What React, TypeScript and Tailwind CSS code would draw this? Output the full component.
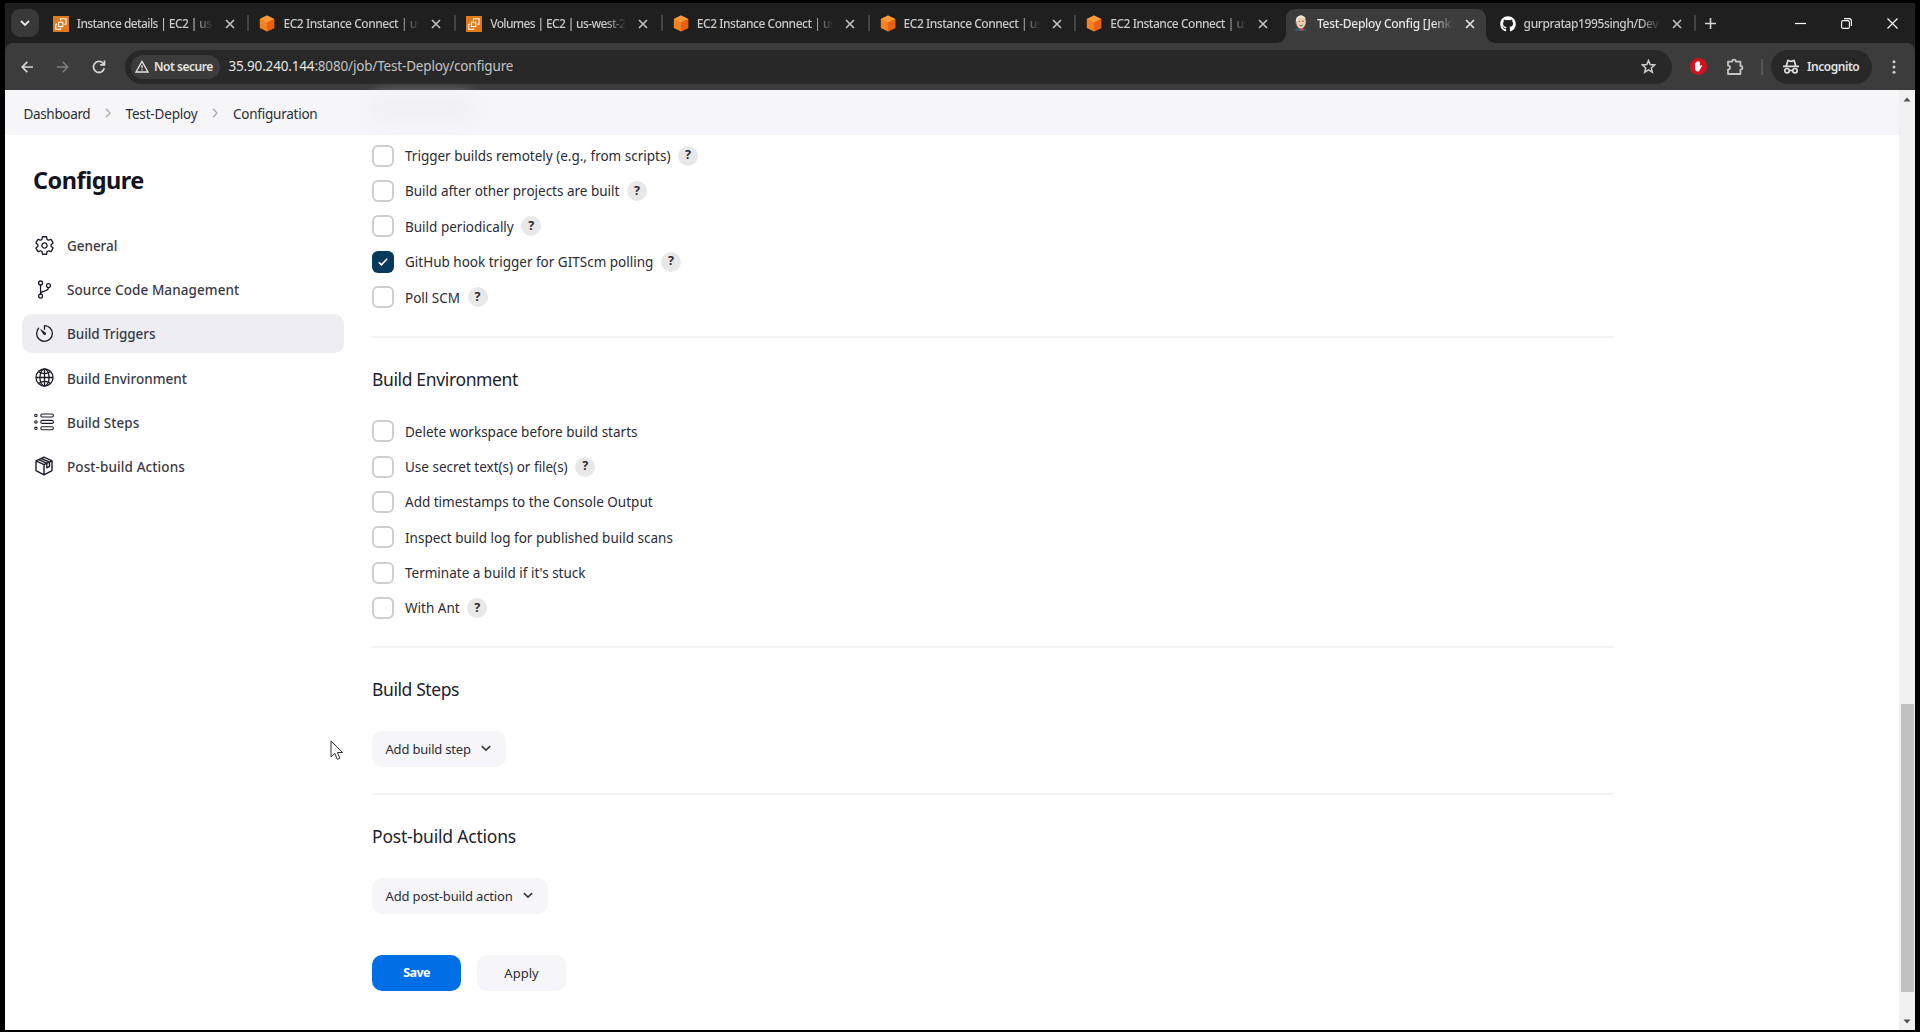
import type { ReactNode } from "react";
import { IoSettingsOutline, IoGlobeOutline, IoTimerOutline, IoGitBranchOutline } from "react-icons/io5";
import { FaGithub } from "react-icons/fa";

const Ec2Icon = () => (
  <svg width="16" height="16" viewBox="0 0 16 16" fill="none">
    <rect width="16" height="16" fill="#e07a1a" />
    <path d="M5.5 6.2h4.3v4.3H5.500zM4 8.300H2.800v5H7.600v-1.500M7.500 4.500V2.700h5.600v5.500h-1.700" stroke="#fff" strokeWidth="1.100" />
  </svg>
);

const CubeIcon = () => (
  <svg width="16" height="17" viewBox="0 0 16 17">
    <path d="M8 .5 15.200 4v9L8 16.500.8 13V4z" fill="#f58220" />
    <path d="M8 .5 15.200 4 8 7.400.8 4z" fill="#fb9a34" />
    <path d="M8 7.400 15.200 4v9L8 16.500z" fill="#e9600f" />
  </svg>
);

const JenkinsIcon = () => (
  <svg width="16" height="17" viewBox="0 0 16 17">
    <path d="M1.500 16c.3-1.800 2-2.700 4-2.800l5 .2c1.600.2 2.300 1.200 2.500 2.600z" fill="#2f5f86" />
    <path d="M6 12.500h4.500l-.6 3.500H8z" fill="#c9453a" />
    <ellipse cx="7.800" cy="7" rx="5" ry="6.400" fill="#ecd0b0" />
    <path d="M3 6C2.600 2.800 5 .6 8 .6c2.500 0 4.200 1.300 4.700 3.200C10.500 2.500 7.500 2.300 5.600 3.200 4.700 4.500 4.700 6 4.300 7.500z" fill="#f6e7d2" />
    <path d="M5.800 6.300h1.400M9.200 6.300h1.400M6.500 10.200c1 .6 2.200.6 3.200 0" stroke="#5d4030" strokeWidth=".9" fill="none" />
    <path d="M2.900 6.500c0 2 .6 4 1.800 5.600" stroke="#7a6353" strokeWidth=".8" fill="none" />
  </svg>
);

const CloseIcon = () => (
  <svg width="10" height="10" viewBox="0 0 10 10" stroke="currentColor" strokeWidth="1.600">
    <path d="m1 1 8 8M9 1 1 9" />
  </svg>
);

type Tab = { icon: ReactNode; title: string; tracking: string; active?: boolean };

const tabs: Tab[] = [
  { icon: <Ec2Icon />, title: "Instance details | EC2 | us-west-2", tracking: "tracking-[-0.6px]" },
  { icon: <CubeIcon />, title: "EC2 Instance Connect | us-west-2", tracking: "tracking-[-0.47px]" },
  { icon: <Ec2Icon />, title: "Volumes | EC2 | us-west-2", tracking: "tracking-[-0.64px]" },
  { icon: <CubeIcon />, title: "EC2 Instance Connect | us-west-2", tracking: "tracking-[-0.47px]" },
  { icon: <CubeIcon />, title: "EC2 Instance Connect | us-west-2", tracking: "tracking-[-0.47px]" },
  { icon: <CubeIcon />, title: "EC2 Instance Connect | us-west-2", tracking: "tracking-[-0.47px]" },
  { icon: <JenkinsIcon />, title: "Test-Deploy Config [Jenkins]", tracking: "tracking-[-0.25px]", active: true },
  { icon: <FaGithub size={16} color="#fff" />, title: "gurpratap1995singh/DevOps", tracking: "tracking-[-0.4px]" },
];

function TabItem({ tab, separator }: { tab: Tab; separator: boolean }) {
  return (
    <div className="relative flex h-[40px] w-[206.700px] shrink-0 items-center pt-[1px] pl-[11px]">
      {tab.active && (
        <svg className="absolute bottom-0 left-[-6px]" width="222" height="34" viewBox="0 0 222 34">
          <path d="M0 34c6 0 10-4 10-10V9c0-5 4-9 9-9h182c5 0 9 4 9 9v15c0 6 4 10 10 10z" fill="#3c3c3c" />
        </svg>
      )}
      <div className="relative flex w-[17px] shrink-0">{tab.icon}</div>
      <div
        className={`relative ml-[7px] w-[138px] overflow-hidden whitespace-nowrap text-[12px] font-medium [mask-image:linear-gradient(to_right,#000_84%,transparent_99%)] ${tab.active ? "text-[#e6e6e6]" : "text-[#c9c9c9]"} ${tab.tracking}`}
      >
        {tab.title}
      </div>
      <div className={`relative ml-[10px] ${tab.active ? "text-[#e6e6e6]" : "text-[#c4c4c4]"}`}>
        <CloseIcon />
      </div>
      {separator && <div className="absolute top-[12px] right-[-1px] h-[16px] w-[2px] bg-[#434343]" />}
    </div>
  );
}

function TabStrip() {
  return (
    <div className="flex h-[40px] items-center bg-[#1f1f1f]">
      <div className="ml-[6px] flex h-[28px] w-[28px] shrink-0 items-center justify-center rounded-[9px] bg-[#393939]">
        <svg width="10" height="7" viewBox="0 0 10 7" fill="none" stroke="#e8e8e8" strokeWidth="1.800">
          <path d="m1 1 4 4 4-4" />
        </svg>
      </div>
      <div className="ml-[2.800px] flex">
        {tabs.map((t, i) => (
          <TabItem key={i} tab={t} separator={i !== 5 && i !== 6} />
        ))}
      </div>
      <svg className="ml-[10px]" width="11" height="11" viewBox="0 0 11 11" stroke="#d5d5d5" strokeWidth="1.600">
        <path d="M5.500 0v11M0 5.500h11" />
      </svg>
      <div className="mr-[17px] ml-auto flex items-center gap-[35px]">
        <svg width="11" height="11" viewBox="0 0 11 11" stroke="#fff" strokeWidth="1.200">
          <path d="M0 5.500h11" />
        </svg>
        <svg width="11" height="11" viewBox="0 0 11 11" fill="none" stroke="#fff" strokeWidth="1.100">
          <rect x=".6" y="2.600" width="7.800" height="7.800" rx="1.500" />
          <path d="M3 .6h5.200a2.200 2.200 0 0 1 2.200 2.200V8" />
        </svg>
        <svg width="11" height="11" viewBox="0 0 11 11" stroke="#fff" strokeWidth="1.200">
          <path d="m.5.5 10 10M10.500.5l-10 10" />
        </svg>
      </div>
    </div>
  );
}

function Toolbar() {
  return (
    <div className="bg-[#1f1f1f]">
      <div className="flex h-[47px] items-center rounded-t-[8px] bg-[#3c3c3c]">
        <svg className="ml-[16px]" width="12" height="12" viewBox="0 0 12 12" fill="none" stroke="#d6d6d6" strokeWidth="1.700">
          <path d="M12 6H1.300M6.300.8 1.200 6l5.100 5.200" />
        </svg>
        <svg className="ml-[24px]" width="12" height="12" viewBox="0 0 12 12" fill="none" stroke="#808080" strokeWidth="1.500">
          <path d="M0 6h10.700M5.700.8 10.800 6l-5.100 5.200" />
        </svg>
        <svg className="ml-[23px]" width="14" height="14" viewBox="0 0 14 14" fill="none" stroke="#d6d6d6" strokeWidth="1.700">
          <path d="M12.300 8.300A5.500 5.500 0 1 1 11 3.200l1.300 1.300" />
          <path d="M12.500.6v4.300H8.200" />
        </svg>
        <div className="ml-[19px] flex h-[34px] w-[1547px] items-center rounded-full bg-[#282828] pl-[6px]">
          <div className="flex h-[24px] w-[89px] items-center rounded-full bg-[#3c3c3c] pl-[4px]">
            <svg width="14" height="13" viewBox="0 0 14 13" fill="none" stroke="#e3e3e3" strokeWidth="1.300">
              <path d="M7 1.400 13 12H1zM7 5v3.300M7 9.300v1.300" />
            </svg>
            <span className="ml-[5px] text-[12px] font-semibold tracking-[-0.48px] whitespace-nowrap text-[#e3e3e3]">Not secure</span>
          </div>
          <span className="ml-[8.500px] text-[13.500px] tracking-[-0.17px] whitespace-nowrap">
            <span className="text-[#e6e6e6]">35.90.240.144</span>
            <span className="text-[#c4c4c4]">:8080/job/Test-Deploy/configure</span>
          </span>
          <svg className="mr-[16px] ml-auto" width="15" height="15" viewBox="0 0 15 15" fill="none" stroke="#cfcfcf" strokeWidth="1.500">
            <path d="m7.500 1.600 1.700 4 4.400.4-3.300 2.900 1 4.300-3.800-2.300-3.800 2.300 1-4.300L1.400 6l4.400-.4z" />
          </svg>
        </div>
        <svg className="ml-[18px]" width="17" height="17" viewBox="0 0 17 17">
          <circle cx="8.500" cy="8.500" r="8.500" fill="#d5121c" />
          <path d="M5 8.600V5.300a.6.6 0 0 1 1.200 0V4.200a.6.6 0 0 1 1.200 0v-.6a.6.6 0 0 1 1.300 0v.6a.6.600 0 0 1 1.200 0v4l1-1c.7-.5 1.500.1 1.100.8l-2.300 4.300c-.4.800-1 1.200-1.900 1.200-1.800 0-2.800-1.200-2.800-2.900z" fill="#fff" />
        </svg>
        <svg className="ml-[19px]" width="18" height="18" viewBox="0 0 18 18" fill="none" stroke="#c4c4c4" strokeWidth="1.800">
          <path d="M2 3.600h4.200c0-2.600 3.600-2.600 3.600 0h4.600V8c2.600 0 2.600 3.600 0 3.600V16H2v-4.300c2.700-.4 2.700-3.600 0-4z" strokeLinejoin="round" />
        </svg>
        <div className="ml-[17px] h-[16px] w-[2px] bg-[#555]" />
        <div className="ml-[8px] flex h-[34px] w-[101px] items-center rounded-full bg-[#282828] pl-[12px]">
          <svg width="16" height="15" viewBox="0 0 16 15" fill="none" stroke="#e0e0e0" strokeWidth="1.700">
            <path d="M0 7.300h16M3.300 7 4.900 1.500l3.100.8 3.100-.8L12.700 7M6.600 11.700q1.400-.9 2.800 0" />
            <circle cx="4" cy="11.700" r="2.200" />
            <circle cx="12" cy="11.700" r="2.200" />
          </svg>
          <span className="ml-[8px] text-[12px] font-semibold tracking-[-0.45px] text-[#e3e3e3]">Incognito</span>
        </div>
        <svg className="ml-[20px]" width="4" height="14" viewBox="0 0 4 14" fill="#d0d0d0">
          <circle cx="2" cy="1.700" r="1.500" />
          <circle cx="2" cy="7" r="1.500" />
          <circle cx="2" cy="12.300" r="1.500" />
        </svg>
      </div>
    </div>
  );
}

const CrumbArrow = () => (
  <svg className="mb-[2px]" width="6" height="10" viewBox="0 0 6 10" fill="none" stroke="#a9a9b2" strokeWidth="1.300">
    <path d="m1 .8 4 4.200-4 4.200" />
  </svg>
);

function Breadcrumbs() {
  return (
    <div className="relative flex h-[45px] items-center bg-[#f6f6f8] pt-[3px] pl-[18.500px] text-[13.500px] text-[#2d2d38]">
      <div className="absolute top-[8px] left-[365px] h-[24px] w-[105px] rounded-full bg-[#f0f0f3] blur-[8px]" />
      <span className="w-[67px] tracking-[-0.34px]">Dashboard</span>
      <div className="ml-[14px]"><CrumbArrow /></div>
      <span className="ml-[15px] w-[72px] tracking-[-0.17px] whitespace-nowrap">Test-Deploy</span>
      <div className="ml-[14px]"><CrumbArrow /></div>
      <span className="ml-[15.500px] tracking-[-0.24px]">Configuration</span>
    </div>
  );
}

const ListIcon = () => (
  <svg width="20" height="18" viewBox="0 0 20 18" fill="none" stroke="#1c1c28" strokeWidth="1.100">
    <rect x="6.800" y="1" width="12.600" height="3" rx="1.500" />
    <rect x="6.800" y="7.400" width="12.600" height="3" rx="1.500" />
    <rect x="6.800" y="13.800" width="12.600" height="3" rx="1.500" />
    <circle cx="1.900" cy="2.500" r="1.200" />
    <circle cx="1.900" cy="8.900" r="1.200" />
    <circle cx="1.900" cy="15.300" r="1.200" />
  </svg>
);

const PackageIcon = () => (
  <svg width="20" height="20" viewBox="0 0 20 20" fill="none" stroke="#1c1c28" strokeWidth="1.400" strokeLinejoin="round">
    <path d="M10 1.200 18 4.800v9.800l-8 4.200-8-4.200V4.800zM2 4.800l8 3.800 8-3.800M10 8.600v10.200" />
    <path d="m4.800 3.600 8 3.700v4.500l2.700-1.400V6M7.300 2.500l8 3.600" />
  </svg>
);

const navItems: { label: string; icon: ReactNode; tracking: string; active?: boolean }[] = [
  { label: "General", icon: <IoSettingsOutline size={21} />, tracking: "tracking-[-0.05px]" },
  { label: "Source Code Management", icon: <IoGitBranchOutline size={21} />, tracking: "tracking-[0.08px]" },
  { label: "Build Triggers", icon: <IoTimerOutline size={21} />, tracking: "tracking-[-0.08px]", active: true },
  { label: "Build Environment", icon: <IoGlobeOutline size={21} />, tracking: "tracking-[0.03px]" },
  { label: "Build Steps", icon: <ListIcon />, tracking: "tracking-[0.06px]" },
  { label: "Post-build Actions", icon: <PackageIcon />, tracking: "tracking-[0.1px]" },
];

function Sidebar() {
  return (
    <div className="w-[367px] shrink-0 pt-[27.500px] pl-[17px]">
      <h1 className="h-[34px] pl-[11px] text-[23.500px] leading-[34px] font-bold tracking-[-0.5px] text-[#14141f]">Configure</h1>
      <nav className="mt-[29px] flex flex-col gap-[5.300px]">
        {navItems.map((n) => (
          <div key={n.label} className={`flex h-[39px] w-[321.500px] items-center rounded-[10px] pl-[11.500px] text-[#1c1c28] ${n.active ? "bg-[#ededf2]" : ""}`}>
            <div className="flex w-[21px] justify-center">{n.icon}</div>
            <span className={`ml-[12.500px] pt-[2px] text-[13.500px] font-medium text-[#3a3a46] ${n.tracking}`}>{n.label}</span>
          </div>
        ))}
      </nav>
    </div>
  );
}

function CheckRow({ label, help, checked }: { label: string; help?: boolean; checked?: boolean }) {
  return (
    <div className="flex h-[35.400px] items-center">
      {checked ? (
        <div className="flex h-[22px] w-[22px] items-center justify-center rounded-[6px] bg-[#07395d]">
          <svg width="10" height="8" viewBox="0 0 10 8" fill="none" stroke="#fff" strokeWidth="1.600">
            <path d="m.8 4.300 2.600 2.600L9.200.8" />
          </svg>
        </div>
      ) : (
        <div className="h-[22px] w-[22px] rounded-[6px] border-2 border-[#cbcfd2] bg-white" />
      )}
      <span className="ml-[11px] pt-[1px] text-[13.500px] whitespace-nowrap text-[#2b2b36]">{label}</span>
      {help && (
        <div className="ml-[7.500px] flex h-[20px] w-[20px] items-center justify-center rounded-full bg-[#e8e8e8] text-[12.500px] font-bold text-[#2b2b36]">?</div>
      )}
    </div>
  );
}

const Rule = () => <div className="h-[2px] w-[1241px] bg-[#f4f4f5]" />;

function Heading({ children, tracking }: { children: string; tracking: string }) {
  return <h2 className={`mt-[27px] h-[28px] text-[17.500px] leading-[28px] text-[#22222c] ${tracking}`}>{children}</h2>;
}

function DropButton({ label, tracking }: { label: string; tracking: string }) {
  return (
    <button className="flex h-[36px] items-center rounded-[10px] bg-[#f6f6f8] pr-[15.500px] pl-[13.500px] text-[13px] text-[#2d2d38]">
      <span className={`pt-[2px] ${tracking}`}>{label}</span>
      <svg className="ml-[10px]" width="10" height="7" viewBox="0 0 10 7" fill="none" stroke="#3a3a46" strokeWidth="1.700">
        <path d="m.8 1.200 4.200 4 4.200-4" />
      </svg>
    </button>
  );
}

function Content() {
  return (
    <div className="flex flex-1 flex-col items-start pt-[3px]">
      <CheckRow label="Trigger builds remotely (e.g., from scripts)" help />
      <CheckRow label="Build after other projects are built" help />
      <CheckRow label="Build periodically" help />
      <CheckRow label="GitHub hook trigger for GITScm polling" help checked />
      <CheckRow label="Poll SCM" help />
      <div className="h-[21px]" />
      <Rule />
      <Heading tracking="tracking-[-0.36px]">Build Environment</Heading>
      <div className="h-[20.500px]" />
      <CheckRow label="Delete workspace before build starts" />
      <CheckRow label="Use secret text(s) or file(s)" help />
      <CheckRow label="Add timestamps to the Console Output" />
      <CheckRow label="Inspect build log for published build scans" />
      <CheckRow label="Terminate a build if it's stuck" />
      <CheckRow label="With Ant" help />
      <div className="h-[20.500px]" />
      <Rule />
      <Heading tracking="tracking-[-0.4px]">Build Steps</Heading>
      <div className="h-[27.500px]" />
      <DropButton label="Add build step" tracking="tracking-[-0.2px]" />
      <div className="h-[26px]" />
      <Rule />
      <Heading tracking="tracking-[-0.2px]">Post-build Actions</Heading>
      <div className="h-[28px]" />
      <DropButton label="Add post-build action" tracking="tracking-[-0.15px]" />
      <div className="mt-[41.500px] flex gap-[16px] text-[13px]">
        <button className="h-[36px] w-[89px] rounded-[10px] bg-[#006fe6] text-[12.500px] font-bold tracking-[-0.6px] text-white">Save</button>
        <button className="h-[36px] w-[89px] rounded-[10px] bg-[#f6f6f8] text-[#2d2d38]">Apply</button>
      </div>
    </div>
  );
}

function Scrollbar() {
  return (
    <div className="flex w-[16px] shrink-0 flex-col items-center bg-[#f0f0f0]">
      <svg className="mt-[7px]" width="8" height="5" viewBox="0 0 8 5" fill="#505050">
        <path d="M.5 4.500 4 .5l3.500 4z" />
      </svg>
      <div className="mt-[602px] h-[288px] w-[13px] bg-[#c1c1c1]" />
      <svg className="mt-[27px]" width="8" height="5" viewBox="0 0 8 5" fill="#505050">
        <path d="M.5.5 4 4.500l3.500-4z" />
      </svg>
    </div>
  );
}

export default function App() {
  return (
    <div className="relative flex h-[1032px] w-[1920px] flex-col overflow-hidden bg-black px-[5px] pt-[3px] pb-[2px] font-['Noto_Sans','Open_Sans',sans-serif]">
      <TabStrip />
      <Toolbar />
      <div className="flex flex-1 bg-white">
        <div className="flex flex-1 flex-col">
          <Breadcrumbs />
          <div className="flex flex-1">
            <Sidebar />
            <Content />
          </div>
        </div>
        <Scrollbar />
      </div>
      <svg className="absolute top-[740px] left-[330px]" width="14" height="21" viewBox="0 0 14 21" fill="#fff" stroke="#333" strokeWidth="1">
        <path d="M1 1v16l3.800-3.600 2.500 5.900 2.600-1.100-2.500-5.700h5.200z" />
      </svg>
    </div>
  );
}
